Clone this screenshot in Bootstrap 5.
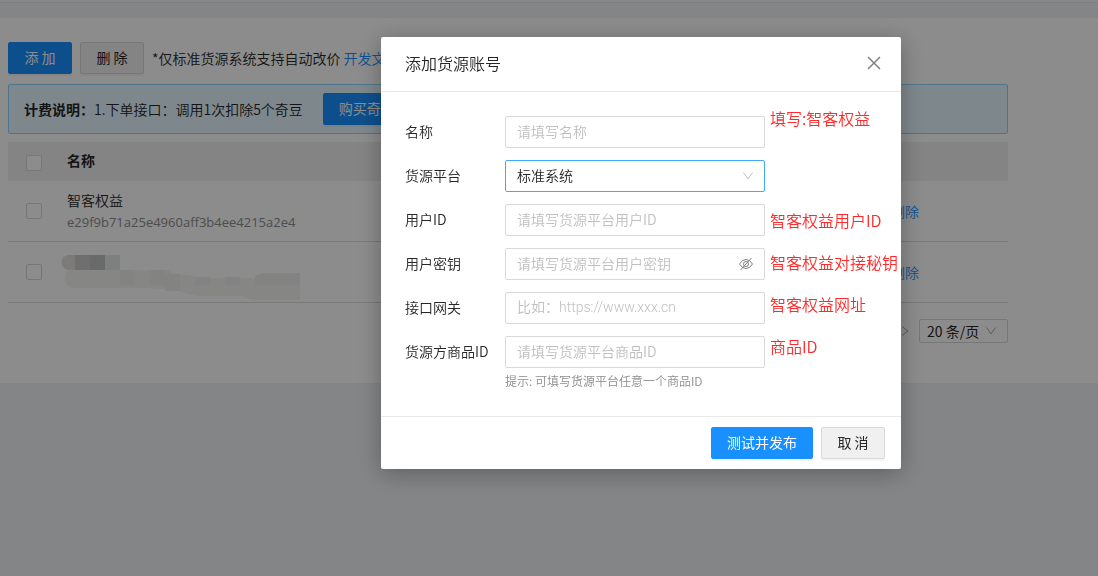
<!DOCTYPE html>
<html lang="zh-CN">
<head>
<meta charset="utf-8">
<meta name="viewport" content="width=device-width, initial-scale=1">
<title>货源账号</title>
<link href="https://cdn.jsdelivr.net/npm/bootstrap@5.3.0/dist/css/bootstrap.min.css" rel="stylesheet">
<style>
  body {
    --line: #d9d9d9;
    --brand: #1890ff;
    font: 14px/22px "Noto Sans CJK SC", sans-serif;
    font-weight: 350;
    color: #262626;
    background: #f0f2f5;
  }
  a { color: var(--brand); text-decoration: none; }
  .top-line { height: 3px; background: #f6f7f9; border-bottom: 1px solid #e4e6e9; }
  .panel { margin-top: 15px; padding: 24px 8px 40px; }
  .panel-inner { max-width: 1000px; }
  .btn {
    --bs-btn-font-size: 14px;
    --bs-btn-line-height: 22px;
    --bs-btn-padding-x: 15px;
    --bs-btn-padding-y: 4px;
    --bs-btn-border-radius: 2px;
    min-width: 64px;
    height: 32px;
    padding: 3px 15px 5px;
    box-shadow: 0 2px 0 rgba(0, 0, 0, .04);
    white-space: nowrap;
  }
  .btn-primary { --bs-btn-bg: #1890ff; --bs-btn-border-color: #1890ff; }
  .btn-plain { --bs-btn-bg: #f0f0f0; --bs-btn-border-color: #d9d9d9; --bs-btn-color: #262626; }
  .alert-note { margin: 10px 0 8px; padding: 8px 15px; gap: 20px; border: 1px solid #91d5ff; border-radius: 2px; background: #e6f7ff; }
  .goods-table { --bs-table-bg: transparent; color: inherit; }
  .goods-table th, .goods-table td { padding: 8px; border-color: #dcdcdc; }
  .goods-table thead th { padding: 7px 8px 10px; background: #f0f0f0; border: 0; }
  .goods-table .pick { width: 51px; padding-left: 18px; }
  .goods-table .ops { width: 125px; }
  .form-check-input { display: block; width: 16px; height: 16px; margin: 0; border-color: var(--line); }
  .form-check-input[type=checkbox] { border-radius: 2px; }
  .hash { color: #8c8c8c; font-family: "Open Sans", sans-serif; font-size: 13px; font-weight: 400; }
  .mosaic { display: block; margin: 4px 0 -8px -6px; }
  .page-size {
    width: 89px; height: 24px; padding: 0 7px; border: 1px solid var(--line);
    border-radius: 2px; background: none; color: inherit; appearance: none;
  }
  .select-wrap { position: relative; }
  .field-icon { position: absolute; right: 11px; top: 50%; transform: translateY(-50%); pointer-events: none; }
  .modal-backdrop { --bs-backdrop-opacity: .45; }
  .modal { padding-left: 184px; }
  .modal-dialog { max-width: 520px; margin: 37px auto; }
  .modal-content { border: 0; border-radius: 2px; color: inherit; box-shadow: 0 4px 24px rgba(0, 0, 0, .3); }
  .modal-header { padding: 15px 20px 17px 24px; border-color: #e8e8e8; }
  .modal-title { font-size: 16px; line-height: 22px; font-weight: 350; }
  .close-btn { padding: 0; border: 0; background: none; line-height: 0; }
  .modal-body { padding: 24px; }
  .modal-footer { padding: 10px 16px; gap: 8px; border-color: #e8e8e8; }
  .modal-footer > * { margin: 0; }
  .form-rows { gap: 12px; }
  .field-label { width: 100px; flex: none; padding-bottom: 2px; }
  .field-box { width: 260px; }
  .field-box .form-control, .field-box .form-select {
    height: 32px; padding: 3px 11px 5px; font-size: 14px; line-height: 22px; font-weight: 350;
    border: 1px solid var(--line); border-radius: 2px; color: inherit; background: #fff;
  }
  .field-box .form-select { border-color: #40a9ff; }
  .field-box .form-control::placeholder { color: #bfbfbf; }
  .field-box .url-input { font-family: Roboto, "Noto Sans CJK SC", sans-serif; }
  .tip { margin: 2px 0 0 100px; font-size: 12px; color: #8c8c8c; }
  .notes { position: absolute; left: 389px; top: 5px; font-size: 16px; line-height: 42px; color: #ff2b2b; white-space: nowrap; }
  .notes p { margin: 0; }
  .notes p:first-child { margin-bottom: 60px; }
</style>
</head>
<body>
<div class="top-line"></div>
<main class="panel bg-white">
  <div class="panel-inner">
    <div class="d-flex align-items-center gap-2">
      <button class="btn btn-primary" type="button">添 加</button>
      <button class="btn btn-plain" type="button">删 除</button>
      <span class="text-nowrap">*仅标准货源系统支持自动改价 <a href="#">开发文档</a></span>
    </div>
    <div class="alert-note d-flex align-items-center">
      <span class="text-nowrap"><b>计费说明：</b>1.下单接口：调用1次扣除5个奇豆</span>
      <button class="btn btn-primary" type="button">购买奇豆</button>
    </div>
    <table class="goods-table table mb-3 align-middle">
      <thead>
        <tr><th class="pick"><input class="form-check-input" type="checkbox" aria-label="全选"></th><th>名称</th><th class="ops"></th></tr>
      </thead>
      <tbody>
        <tr>
          <td class="pick"><input class="form-check-input" type="checkbox" aria-label="选择智客权益"></td>
          <td><div>智客权益</div><div class="hash">e29f9b71a25e4960aff3b4ee4215a2e4</div></td>
          <td class="ops"><a href="#">删除</a></td>
        </tr>
        <tr>
          <td class="pick"><input class="form-check-input" type="checkbox" aria-label="选择第二行"></td>
          <td>
            <svg class="mosaic" width="250" height="48" viewBox="0 0 250 48" aria-hidden="true">
              <path fill="#e3e1df" d="M14 1H8a7.500 7.500 0 0 0 0 15h6z"/>
              <path fill="#cacaca" d="M14 1h15v15H14z"/><path fill="#bfc2c1" d="M29 1h15v15H29z"/><path fill="#e5e9e7" d="M44 1h15v15H44z"/>
              <path fill="#f4f4f3" d="M14 16h96v4q18 0 30 4h50q8 4 14-1 4-4 10-4h25v27h-44q-10-1-14-4h-38q-15 0-26-6l-34-2H14q-10 0-10-10T14 16z"/>
              <path fill="#efefef" d="M59 16h14v15H59zM89 16h15v15H89zM134 23h15v8h-15zM164 23h15v8h-15zM224 19h15v12h-15z"/>
              <path fill="#efeeec" d="M104 20h15v17h-15zM194 22l8-3h22v12h-30z"/>
              <path fill="#fff" d="M211 46h35v2h-35z"/>
            </svg>
          </td>
          <td class="ops"><a href="#">删除</a></td>
        </tr>
      </tbody>
    </table>
    <div class="d-flex justify-content-end align-items-center">
      <svg class="me-2" width="12" height="12" viewBox="0 0 12 12" fill="none" stroke="#a6a6a6" aria-hidden="true"><path d="M3 1.500 9 6 3 10.500"/></svg>
      <div class="select-wrap">
        <select class="page-size" aria-label="每页条数"><option>20 条/页</option></select>
        <svg class="field-icon" width="12" height="12" viewBox="0 0 12 12" fill="none" stroke="#a6a6a6" aria-hidden="true"><path d="M1.500 2.500 6 9l4.500-6.500"/></svg>
      </div>
    </div>
  </div>
</main>

<div class="modal-backdrop show"></div>
<div class="modal d-block" tabindex="-1" role="dialog" aria-labelledby="dialogTitle">
  <div class="modal-dialog">
    <form class="modal-content">
      <div class="modal-header">
        <h1 class="modal-title" id="dialogTitle">添加货源账号</h1>
        <button class="close-btn" type="button" aria-label="关闭">
          <svg width="14" height="14" viewBox="0 0 14 14" fill="none" stroke="#808080" stroke-width="1.500"><path d="M1 1l12 12M13 1 1 13"/></svg>
        </button>
      </div>
      <div class="modal-body">
        <div class="form-rows d-grid">
          <div class="d-flex align-items-center">
            <label class="field-label" for="name">名称</label>
            <div class="field-box"><input class="form-control" id="name" type="text" placeholder="请填写名称"></div>
          </div>
          <div class="d-flex align-items-center">
            <label class="field-label" for="platform">货源平台</label>
            <div class="field-box select-wrap">
              <select class="form-select" id="platform"><option>标准系统</option></select>
              <svg class="field-icon" width="12" height="12" viewBox="0 0 12 12" fill="none" stroke="#bfbfbf" aria-hidden="true"><path d="M1.500 2.500 6 9l4.500-6.500"/></svg>
            </div>
          </div>
          <div class="d-flex align-items-center">
            <label class="field-label" for="uid">用户ID</label>
            <div class="field-box"><input class="form-control" id="uid" type="text" placeholder="请填写货源平台用户ID"></div>
          </div>
          <div class="d-flex align-items-center">
            <label class="field-label" for="secret">用户密钥</label>
            <div class="field-box select-wrap">
              <input class="form-control" id="secret" type="password" placeholder="请填写货源平台用户密钥">
              <svg class="field-icon" width="16" height="14" viewBox="0 0 16 14" fill="none" stroke="#808080" aria-hidden="true"><path d="M1.500 7Q4 2.500 8 2.500T14.500 7Q12 11.500 8 11.500T1.500 7zM13.500 1 2.500 13"/><circle cx="8" cy="7" r="2.500"/></svg>
            </div>
          </div>
          <div class="d-flex align-items-center">
            <label class="field-label" for="gateway">接口网关</label>
            <div class="field-box"><input class="form-control url-input" id="gateway" type="text" placeholder="比如：https://www.xxx.cn"></div>
          </div>
          <div class="d-flex align-items-center">
            <label class="field-label" for="goods">货源方商品ID</label>
            <div class="field-box"><input class="form-control" id="goods" type="text" placeholder="请填写货源平台商品ID"></div>
          </div>
        </div>
        <p class="tip">提示: 可填写货源平台任意一个商品ID</p>
        <div class="notes">
          <p>填写:智客权益</p>
          <p>智客权益用户ID</p>
          <p>智客权益对接秘钥</p>
          <p>智客权益网址</p>
          <p>商品ID</p>
        </div>
      </div>
      <div class="modal-footer">
        <button class="btn btn-primary" type="submit">测试并发布</button>
        <button class="btn btn-plain" type="button">取 消</button>
      </div>
    </form>
  </div>
</div>
<script src="https://cdn.jsdelivr.net/npm/bootstrap@5.3.0/dist/js/bootstrap.bundle.min.js"></script>
</body>
</html>
